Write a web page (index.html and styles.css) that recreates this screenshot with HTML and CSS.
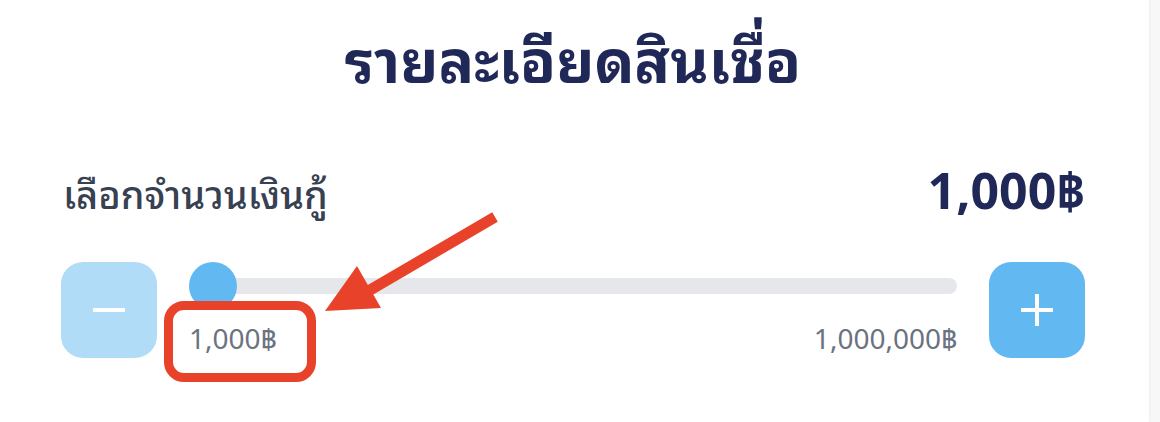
FILE: index.html
```html
<!DOCTYPE html>
<html lang="th">
<head>
<meta charset="utf-8">
<title>รายละเอียดสินเชื่อ</title>
<link rel="stylesheet" href="styles.css">
</head>
<body>
<main class="card">
  <h1 class="title">รายละเอียดสินเชื่อ</h1>
  <div class="amount-row">
    <span class="amount-label">เลือกจำนวนเงินกู้</span>
    <span class="amount-value">1,000฿</span>
  </div>
  <div class="slider-row">
    <button class="step step-minus" aria-label="ลด">
      <svg width="32" height="32" viewBox="0 0 32 32"><path d="M1 16H31" stroke="#fff" stroke-width="4" stroke-linecap="round"/></svg>
    </button>
    <div class="slider">
      <div class="track">
        <span class="thumb"></span>
      </div>
      <div class="range-labels">
        <span>1,000฿</span>
        <span>1,000,000฿</span>
      </div>
    </div>
    <button class="step step-plus" aria-label="เพิ่ม">
      <svg width="32" height="32" viewBox="0 0 32 32"><path d="M1 16H31M16 1V31" stroke="#fff" stroke-width="4" stroke-linecap="round"/></svg>
    </button>
  </div>
  <div class="callout-box"></div>
  <svg class="callout-arrow" width="200" height="120" viewBox="0 0 200 120">
    <path d="M180 17 L50 93" stroke="#e8432a" stroke-width="11" stroke-linecap="butt"/>
    <polygon points="42,66 10,111 66,108" fill="#e8432a"/>
  </svg>
</main>
</body>
</html>
```
FILE: styles.css
```css
* { box-sizing: border-box; }
html, body { margin: 0; padding: 0; }
body {
  background: #f7f7f8;
  width: 1160px;
  height: 422px;
  overflow: hidden;
  font-family: "Noto Sans", "Noto Sans Thai Looped", "Noto Sans Thai", sans-serif;
}
.card {
  position: relative;
  width: 1149px;
  height: 422px;
  background: #fff;
  box-shadow: 1px 0 2px rgba(0,0,0,0.04);
  padding: 0 64px 0 61px;
}
.title {
  margin: 0;
  padding-top: 12px;
  text-align: center;
  font-size: 59px;
  line-height: 96px;
  font-weight: 700;
  color: #1f2857;
}
.amount-row {
  display: flex;
  justify-content: space-between;
  align-items: baseline;
  margin-top: 58px;
  padding-left: 2px;
}
.amount-label {
  font-size: 38px;
  font-weight: 500;
  color: #374151;
  line-height: 48px;
}
.amount-value {
  font-size: 50px;
  font-weight: 700;
  color: #1f2857;
  line-height: 48px;
}
.slider-row {
  display: flex;
  align-items: flex-start;
  gap: 32px;
  margin-top: 44px;
}
.step {
  width: 96px;
  height: 96px;
  border: 0;
  border-radius: 22px;
  padding: 0;
  display: flex;
  align-items: center;
  justify-content: center;
  flex: none;
}
.step-minus { background: #b1dcf8; }
.step-plus { background: #62b9f2; }
.slider { flex: 1; }
.track {
  position: relative;
  margin-top: 16px;
  height: 16px;
  border-radius: 8px;
  background: #e5e7eb;
}
.thumb {
  position: absolute;
  left: 0;
  top: -16px;
  width: 48px;
  height: 48px;
  border-radius: 50%;
  background: #62b9f2;
}
.range-labels {
  display: flex;
  justify-content: space-between;
  margin-top: 24px;
  font-size: 28px;
  line-height: 40px;
  color: #6b7280;
}
.callout-box {
  position: absolute;
  left: 164px;
  top: 301px;
  width: 152px;
  height: 81px;
  border: 9px solid #e8432a;
  border-radius: 20px;
}
.callout-arrow {
  position: absolute;
  left: 315px;
  top: 200px;
}
```
